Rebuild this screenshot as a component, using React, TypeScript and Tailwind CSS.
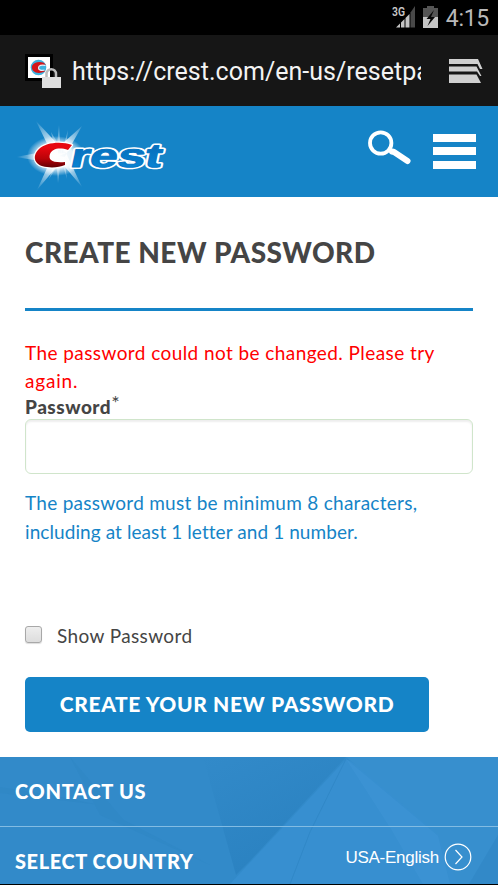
import React from "react";

function StatusBar() {
  return (
    <div className="flex h-[35px] items-start justify-end bg-black pr-[9px] text-[#b9b9b9]">
      <svg width="54" height="35" viewBox="0 0 54 35" className="mr-[1px] shrink-0">
        <text x="1" y="16" fontSize="12.5" fontWeight="600" fontFamily="Roboto, sans-serif" textLength="13" lengthAdjust="spacingAndGlyphs" fill="#c8c8c8">3G</text>
        <path d="M5 27.500l4-4v4zM10 22.500l3.500-3.500v8.500H10zM14.500 18l4-4v13.500h-4z" fill="#c4c4c4" />
        <path d="M19.500 12.500l4.500-6.500v21.500h-4.500z" fill="#484848" />
        <path d="M36 6h7v2h4v9H32V8h4z" fill="#555" />
        <path d="M32 17h15v11H32z" fill="#c4c4c4" />
        <path d="M43 10 35.500 19h4l-3 7 7.500-9h-4z" fill="#080808" />
      </svg>
      <span className="font-[Roboto,sans-serif] text-[23px] leading-[38px] -tracking-[0.3px]">4:15</span>
    </div>
  );
}

function BrowserBar() {
  return (
    <div className="flex h-[71px] items-center bg-[#161616] pl-[25px] pr-[15px]">
      <svg width="37" height="37" viewBox="0 0 37 37" className="mt-[2px] shrink-0">
        <path d="M0 1h28v27H0z" fill="#000" />
        <path d="M3 4h22v21H3z" fill="#fff" />
        <circle cx="13.5" cy="14.5" r="7.8" fill="#3eb2df" />
        <path d="M21 11.500c-4-4-12-3-14 1.500-1 5 4 8 10 6.500 2-.5 3-1 3-2-3 1-7 0-6-3 1-2 4-3 7-3z" fill="#d3161b" />
        <path d="M20.500 12.500c-4-1-7 0-7 2.500 0 2 3 3 6 2" fill="none" stroke="#e8f4fb" strokeWidth="1.200" />
        <path d="M21.500 24v-3c0-6.500 9.500-6.500 9.500 0v3" fill="none" stroke="#bdbdbd" strokeWidth="2.500" />
        <path d="M17 24h19v11H17z" fill="#dedede" />
      </svg>
      <div className="ml-[10px] mt-[3px] w-[349px] overflow-hidden whitespace-nowrap font-[Roboto,sans-serif] text-[25px] leading-8 tracking-[0.02px] text-[#f3f3f3]">
        https://crest.com/en-us/resetpa
      </div>
      <svg width="34" height="26" viewBox="0 0 34 26" className="ml-auto shrink-0">
        <path d="M0 1h29l4.500 10H31l-2.500-5H0z" fill="#d0d0d0" />
        <path d="M0 8.500h27.500l5 9.500H31l-3-4.500H0z" fill="#d0d0d0" />
        <path d="M0 16.500h27.500l4.500 8.500H0z" fill="#d0d0d0" />
      </svg>
    </div>
  );
}

function CrestLogo() {
  return (
    <svg width="160" height="80" viewBox="10 113 160 80" aria-label="Crest" className="shrink-0">
      <defs>
        <radialGradient id="glow">
          <stop offset="0" stopColor="#fff" />
          <stop offset=".6" stopColor="#fff" stopOpacity=".9" />
          <stop offset="1" stopColor="#fff" stopOpacity="0" />
        </radialGradient>
        <radialGradient id="ray" gradientUnits="userSpaceOnUse" cx="58" cy="156" r="42">
          <stop offset=".3" stopColor="#fff" stopOpacity=".85" />
          <stop offset="1" stopColor="#fff" stopOpacity="0" />
        </radialGradient>
        <linearGradient id="red" x1="0" x2="0" y1="0" y2="1">
          <stop offset=".2" stopColor="#e70810" />
          <stop offset=".65" stopColor="#b90308" />
          <stop offset="1" stopColor="#640004" />
        </linearGradient>
        <linearGradient id="blue" x1="0" x2="0" y1="0" y2="1">
          <stop offset=".3" stopColor="#0870bd" />
          <stop offset="1" stopColor="#098ada" />
        </linearGradient>
      </defs>
      <g fill="url(#ray)">
        <path d="M36 122l30 32-12 5zM82 127l-30 27 12 5zM37 191l16-35 12 2zM82 188l-28-33 12-1zM16 158l42-8v15z" />
        <path d="M51 133l5 23 3-30 2 30 7-25-3 25zM49 180l7-20 2 24 3-24 6 20-3-23z" opacity=".5" />
      </g>
      <ellipse cx="56" cy="157" rx="29" ry="20" fill="url(#glow)" />
      <g fontFamily="'Liberation Sans', Arial, sans-serif" fontWeight="700" fontSize="33" strokeLinejoin="round">
        <text aria-hidden="true" transform="translate(69 168) skewX(-12)" textLength="91" lengthAdjust="spacingAndGlyphs" fill="#fff" stroke="#fff" strokeWidth="4">rest</text>
        <path d="M72 146c-10-4-26-3-33 4-8 8-4 17 8 18 6 1 13 0 18-2v-3c-13 1-17-2-15-8 2-5 9-7 18-4z" fill="url(#red)" stroke="#fff" strokeWidth="2.500" paintOrder="stroke" />
        <text transform="translate(69 168) skewX(-12)" textLength="91" lengthAdjust="spacingAndGlyphs" fill="url(#blue)" stroke="#0878c5" strokeWidth="1">rest</text>
      </g>
    </svg>
  );
}

function SiteHeader() {
  return (
    <header className="flex h-[91px] items-center bg-[#1584c7] pl-[10px] pr-[22px]">
      <CrestLogo />
      <svg width="44" height="36" viewBox="0 0 44 36" className="-mt-[8px] ml-auto shrink-0" fill="none" stroke="#fff">
        <circle cx="12.700" cy="13" r="10.700" strokeWidth="3.800" />
        <path d="M24 21.500l2 .5 13.500 9" strokeWidth="6" strokeLinecap="round" strokeLinejoin="round" />
      </svg>
      <div className="-mt-[1px] ml-[21px] flex w-[43px] flex-col gap-[5.500px]">
        <span className="h-2 bg-white" />
        <span className="h-2 bg-white" />
        <span className="h-2 bg-white" />
      </div>
    </header>
  );
}

function Footer() {
  return (
    <footer className="relative h-[127px] bg-[#328ac9] font-[Lato,sans-serif] text-white">
      <svg className="absolute inset-0" width="498" height="127" viewBox="0 0 498 127">
        <defs>
          <linearGradient id="facet" x1="0" y1="0" x2=".6" y2="1">
            <stop offset="0" stopColor="#328ac9" />
            <stop offset="1" stopColor="#2a81c0" />
          </linearGradient>
        </defs>
        <path d="M203 0h143L250 104l-14 14z" fill="url(#facet)" />
        <path d="M230 127 346 2l152 78v47z" fill="#378fd0" />
        <path d="M346 0h152v127h-40l-20-50z" fill="#378fce" />
        <path d="M346 2l92 77 12 48h-27l-32-55z" fill="#3f96d6" opacity=".55" />
        <path d="M346 2 310 75l-20 52" fill="none" stroke="#2d83c2" opacity=".6" />
        <path d="M0 30l50 8 50 10-100-12zM70 0l54 63 86 45-110-50z" fill="#277eba" opacity=".18" />
        <path d="M498 78l-29 49h29z" fill="#2f86c5" opacity=".6" />
      </svg>
      <div className="relative flex h-[70px] items-center border-b border-[#82bce3] px-[15px]">
        <span className="-mt-[2px] text-[20px] font-black tracking-[0.72px]">CONTACT US</span>
      </div>
      <div className="relative flex h-[57px] items-center justify-between pl-[15px] pr-[26px]">
        <span className="mt-[11px] text-[20px] font-black tracking-[0.58px]">SELECT COUNTRY</span>
        <span className="flex items-center gap-[5px] pt-[3px] font-['Liberation_Sans',Arial,sans-serif] text-[17px] -tracking-[0.25px]">
          <span className="mt-[1px]">USA-English</span>
          <svg width="28" height="28" viewBox="0 0 28 28" fill="none" stroke="#fff">
            <circle cx="14" cy="14" r="12.800" strokeWidth="1.200" />
            <path d="M11.500 7l6.500 7-6.500 7" strokeWidth="1.200" />
          </svg>
        </span>
      </div>
    </footer>
  );
}

export default function App() {
  return (
    <div className="flex h-[885px] w-[498px] flex-col overflow-hidden bg-black">
      <StatusBar />
      <BrowserBar />
      <SiteHeader />
      <main className="h-[560px] bg-white px-[25px] font-[Lato,sans-serif] text-[#454545]">
        <h1 className="h-[114px] whitespace-nowrap border-b-[3px] border-[#1584c7] pt-[37px] text-[28px] font-black leading-9 tracking-[0.46px]">CREATE NEW PASSWORD</h1>
        <p className="pt-[28px] text-[19px] leading-[28px] tracking-[0.42px] text-[#f00]">
          <span className="block whitespace-nowrap">The password could not be changed. Please try</span>
          <span className="tracking-[0.8px]">again.</span>
        </p>
        <label htmlFor="password" className="flex h-[24px] items-center text-[19px] font-black leading-6 tracking-[0.5px]">
          Password<span className="-mt-[10px] text-[20px] font-normal">*</span>
        </label>
        <input id="password" type="password" className="block h-[55px] w-full rounded-[6px] border-[1.500px] border-[#d0e5cb] bg-white px-3 shadow-[inset_0_2px_2px_#eee] outline-none" />
        <p className="whitespace-nowrap pt-[14px] text-[19px] leading-[29px] tracking-[0.27px] text-[#1584c7]">
          The password must be minimum 8 characters,<br />
          <span className="tracking-[0.08px]">including at least 1 letter and 1 number.</span>
        </p>
        <label className="mt-[76px] flex h-[28px] items-center text-[19px] tracking-[0.38px]">
          <input type="checkbox" className="-mt-[4px] mr-[15px] h-[17px] w-[17px] appearance-none rounded-[3px] border border-[#a8a8a8] bg-linear-to-b from-[#eee] to-[#ddd] shadow-[0_1px_1px_#ddd]" />
          Show Password
        </label>
        <button className="mt-[27px] flex h-[55px] w-[404px] items-center justify-center rounded-[5px] bg-[#1584c7] pb-[2px] text-[21px] font-black tracking-[0.62px] text-white">
          CREATE YOUR NEW PASSWORD
        </button>
      </main>
      <Footer />
    </div>
  );
}
